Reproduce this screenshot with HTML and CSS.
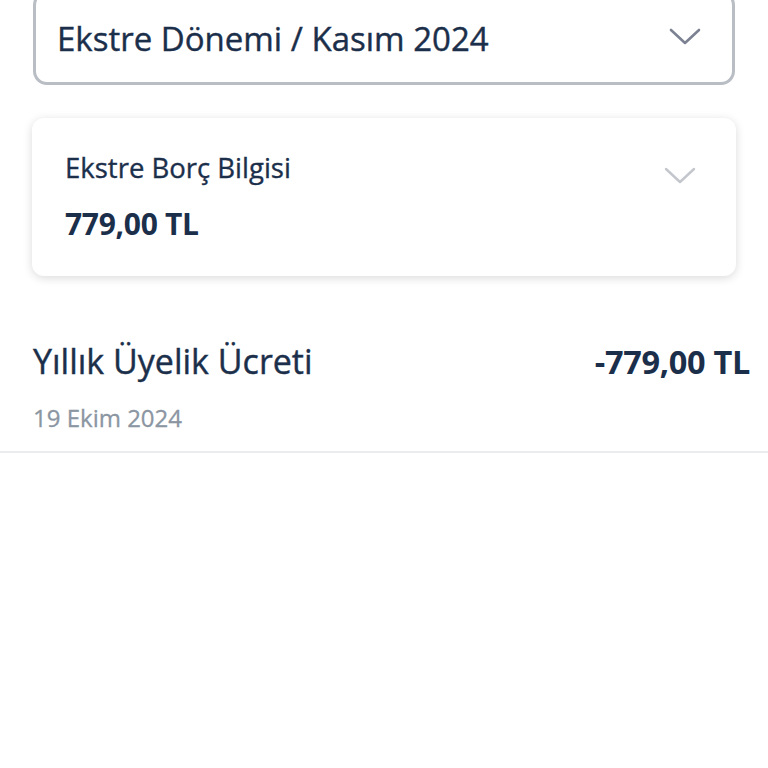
FILE: index.html
```html
<!DOCTYPE html>
<html lang="tr">
<head>
<meta charset="utf-8">
<link rel="stylesheet" href="styles.css">
</head>
<body>
<div class="page">
  <div class="select">
    <span class="select-text">Ekstre Dönemi / Kasım 2024</span>
    <svg class="chev chev-dark" width="32" height="18" viewBox="0 0 32 18"><path d="M2 2 L16 15 L30 2" fill="none" stroke="#7c8292" stroke-width="2.6" stroke-linecap="round" stroke-linejoin="round"/></svg>
  </div>
  <div class="card">
    <div class="card-text">
      <div class="card-title">Ekstre Borç Bilgisi</div>
      <div class="card-amount">779,00 TL</div>
    </div>
    <svg class="chev chev-light" width="32" height="18" viewBox="0 0 32 18"><path d="M2 2 L16 15 L30 2" fill="none" stroke="#c3c6cc" stroke-width="2.4" stroke-linecap="round" stroke-linejoin="round"/></svg>
  </div>
  <div class="row">
    <div class="row-top">
      <span class="row-title">Yıllık Üyelik Ücreti</span>
      <span class="row-amount">-779,00 TL</span>
    </div>
    <div class="row-date">19 Ekim 2024</div>
  </div>
</div>
</body>
</html>
```

FILE: styles.css
```css
html, body {
  margin: 0;
  padding: 0;
  background: #ffffff;
}
body {
  font-family: "Open Sans", "Noto Sans", sans-serif;
  color: #1b2f4b;
}
.page {
  display: flex;
  flex-direction: column;
}
.select {
  margin: -9px 33px 0 33px;
  height: 94px;
  box-sizing: border-box;
  border: 3px solid #b9bdc4;
  border-radius: 14px;
  display: flex;
  align-items: center;
  justify-content: space-between;
  padding: 0 31px 0 21px;
}
.select-text {
  font-size: 33px;
  line-height: 1;
  -webkit-text-stroke: 0.4px #1b2f4b;
}
.chev-dark {
  margin-top: -2px;
}
.card {
  margin: 33px 32px 0 32px;
  height: 158px;
  box-sizing: border-box;
  border-radius: 12px;
  background: #fff;
  box-shadow: 0 2px 10px rgba(0, 0, 0, 0.15);
  display: flex;
  justify-content: space-between;
  align-items: flex-start;
  padding: 33px 40px 0 33px;
}
.card-title {
  font-size: 27.5px;
  line-height: 34px;
  -webkit-text-stroke: 0.35px #1b2f4b;
}
.card-amount {
  font-size: 30px;
  font-weight: 700;
  line-height: 40px;
  margin-top: 19px;
  letter-spacing: -0.3px;
}
.chev-light {
  margin-top: 16px;
}
.row {
  margin-top: 63px;
  padding: 0 18px 17px 33px;
  border-bottom: 2px solid #ebecee;
}
.row-top {
  display: flex;
  justify-content: space-between;
  align-items: baseline;
}
.row-title {
  font-size: 34px;
  line-height: 44px;
  -webkit-text-stroke: 0.4px #1b2f4b;
}
.row-amount {
  font-size: 32.5px;
  font-weight: 700;
  line-height: 44px;
  letter-spacing: -0.3px;
}
.row-date {
  margin-top: 18px;
  font-size: 24px;
  line-height: 32px;
  color: #8b96a2;
  -webkit-text-stroke: 0.3px #8b96a2;
}
```
